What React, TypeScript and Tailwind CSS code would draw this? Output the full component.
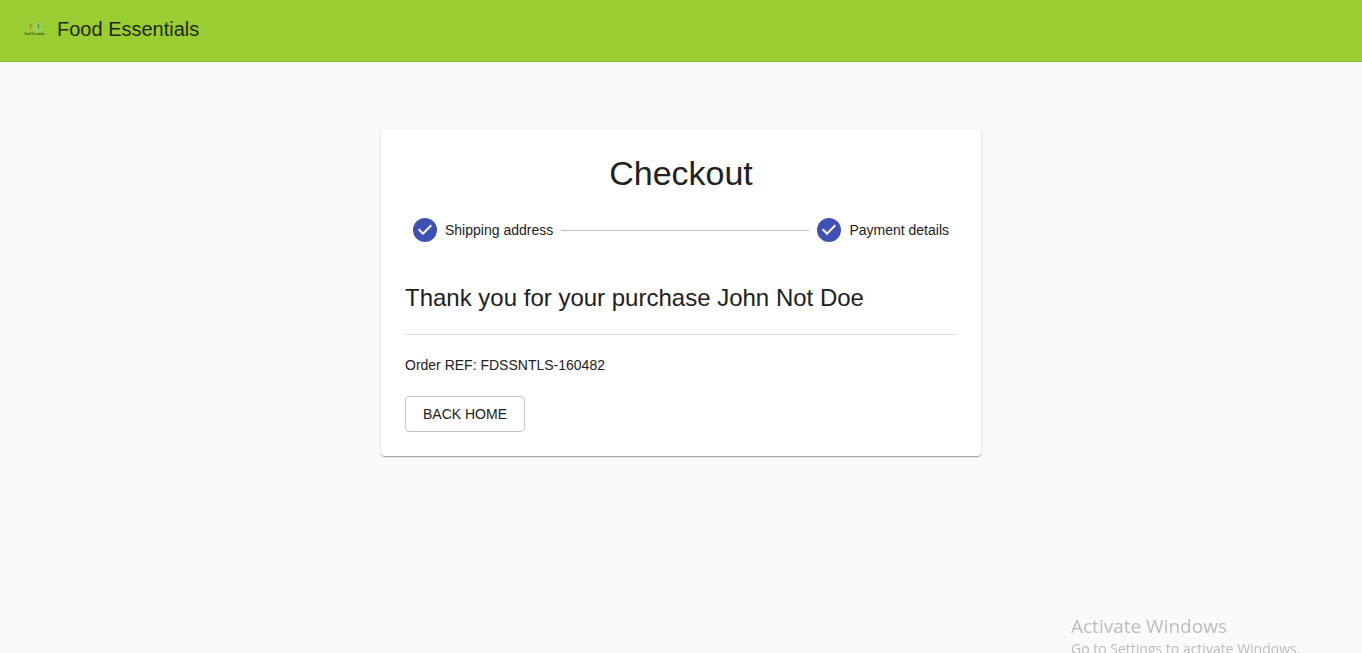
import React from "react";

function Logo() {
  return (
    <svg viewBox="0 0 42 28" className="h-[14px] w-[21px]" role="img" aria-label="Food Essentials logo">
      <circle cx="13" cy="10" r="7" fill="none" stroke="#c8b450" strokeWidth="2.4" />
      <circle cx="29" cy="10" r="7" fill="none" stroke="#80dcaa" strokeWidth="2.4" />
      <path d="M13 5v10M11.8 5v4h2.4V5" fill="none" stroke="#8a7a2c" strokeWidth="1.2" />
      <path d="M29 5v10M28 11V6l2-1" fill="none" stroke="#3f8450" strokeWidth="1.2" />
      <text x="21" y="25" textAnchor="middle" fontFamily="Liberation Serif, serif" fontSize="6" fontWeight="700" fill="#3d5518">
        Food Essentials
      </text>
    </svg>
  );
}

function Step({ label }: { label: string }) {
  return (
    <li className="flex items-center gap-2 px-2">
      <svg viewBox="0 0 24 24" className="size-6 shrink-0 fill-[#3f51b5]" aria-hidden="true">
        <path d="M12 0a12 12 0 1 0 0 24 12 12 0 0 0 0-24zm-2 17l-5-5 1.4-1.4 3.6 3.6 7.6-7.6L19 8l-9 9z" />
      </svg>
      <span className="text-sm whitespace-nowrap">{label}</span>
    </li>
  );
}

export default function App() {
  return (
    <div className="min-h-screen bg-[#fafafa] font-['Liberation_Sans',Arial,sans-serif] text-[#212121]">
      <header className="border-b border-[#87b42d] bg-[#9acd32] px-6 pt-[14px] pb-[17px]">
        <a href="#home" className="inline-flex h-[30px] items-center gap-3 align-top text-xl text-[#1f2906]">
          <Logo />
          <span>Food Essentials</span>
        </a>
      </header>

      <main className="mx-auto max-w-[632px] px-4 pt-[67px]">
        <section className="rounded bg-white px-6 pt-[23px] pb-6 shadow-[0_2px_1px_-1px_rgba(0,0,0,0.2),0_1px_1px_0_rgba(0,0,0,0.14),0_1px_3px_0_rgba(0,0,0,0.12)]">
          <h1 className="text-center text-[34px] leading-[42px]">Checkout</h1>
          <ol className="flex items-center pt-6 pb-10">
            <Step label="Shipping address" />
            <li aria-hidden="true" className="flex-1 border-t border-[#bdbdbd]" />
            <Step label="Payment details" />
          </ol>
          <h2 className="text-2xl leading-8">Thank you for your purchase John Not Doe</h2>
          <hr className="my-5 border-[#e0e0e0]" />
          <p className="text-sm">Order REF: FDSSNTLS-160482</p>
          <button type="button" className="mt-[21px] h-9 rounded border border-[#c4c4c4] px-[17px] text-sm uppercase">
            Back Home
          </button>
        </section>
      </main>

      <aside className="pointer-events-none fixed right-0 bottom-0 h-[41px] w-[291px] overflow-hidden font-['Open_Sans','Noto_Sans',sans-serif] text-[#bcbcbc]">
        <p className="text-[19px] leading-[28px]">Activate Windows</p>
        <p className="text-sm leading-[18px]">Go to Settings to activate Windows.</p>
      </aside>
    </div>
  );
}
